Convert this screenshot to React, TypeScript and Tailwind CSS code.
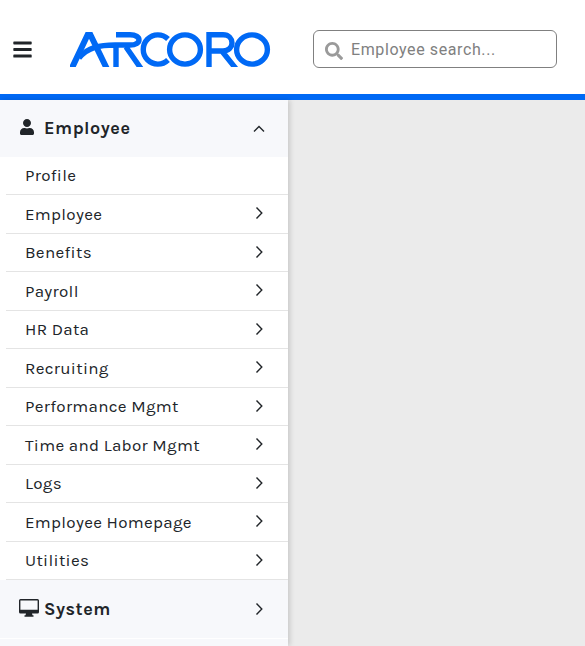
import { FaUser, FaBars, FaSearch } from "react-icons/fa";

const items = ["Employee","Benefits","Payroll","HR Data","Recruiting","Performance Mgmt","Time and Labor Mgmt","Logs","Employee Homepage","Utilities"];

function Logo() {
  return (
    <svg width="201" height="35" viewBox="0 0 201 35" fill="none" stroke="#0069f5" strokeWidth="5.4">
      <path d="M1 38 L18 2 L20 2 L37.5 38" strokeWidth="6" />
      <path d="M9 26 C 18 15 30 13 45 13 H60 C 72 13 72 2.8 60 2.8 H46 M46 13 V38 M56 15 L72 38" />
      <path d="M98 7 A14.6 14.6 0 1 0 98 28" />
      <ellipse cx="115" cy="17.5" rx="15.4" ry="14.6" />
      <path d="M139 38 V2.8 H153 C 165 2.8 165 19 153 19 H139 M151 18 L167 38" />
      <ellipse cx="182" cy="17.5" rx="15.4" ry="14.6" />
    </svg>
  );
}

function Monitor() {
  return (
    <svg width="20" height="18" viewBox="0 0 20 18" fill="#212529">
      <path fillRule="evenodd" d="M1.5 0 H18.5 A1.5 1.5 0 0 1 20 1.5 V13 A1.5 1.5 0 0 1 18.5 14.5 H13 L13.5 16.2 H14.5 V17.8 H5.5 V16.2 H6.5 L7 14.5 H1.5 A1.5 1.5 0 0 1 0 13 V1.5 A1.5 1.5 0 0 1 1.5 0 Z M1.4 1.5 V10.8 H18.6 V1.5 Z" />
    </svg>
  );
}

function Chevron({ dir }: { dir: "up" | "right" | "sys" }) {
  const cls = dir === "up" ? "ml-auto mt-[1px]" : dir === "sys" ? "ml-auto" : "ml-auto -mt-[2px]";
  return (
    <svg width="16" height="16" viewBox="0 0 16 16" fill="none" stroke="#212529" strokeWidth="1.4" className={cls}>
      <path d={dir === "up" ? "M3 10.5 L8 5.5 L13 10.5" : "M5.5 2.5 L10.8 8 L5.5 13.5"} />
    </svg>
  );
}

export default function App() {
  return (
    <div className="h-[646px] w-[585px] overflow-hidden bg-[#ebebeb] font-['Karla','Noto_Sans',sans-serif] text-[#212529]">
      <header className="flex h-[100px] items-center border-b-[6px] border-[#0069f5] bg-white pl-3 pt-1">
        <FaBars className="h-[21px] w-[21px] text-[#212529]" />
        <div className="ml-[37px]"><Logo /></div>
        <div className="ml-[42px] flex h-[38px] w-[244px] items-center rounded-md border border-[#808080] bg-white pl-[11px]">
          <FaSearch className="mt-[3px] h-[18px] w-[18px] text-[#9a9a9a]" />
          <span className="ml-2 mt-[2px] font-['Roboto',sans-serif] text-base tracking-[0.6px] text-[#808080]">Employee search...</span>
        </div>
      </header>
      <aside className="h-[546px] w-[288px] bg-white shadow-[2px_0_5px_rgba(0,0,0,0.15)]">
        <div className="flex h-[57px] items-center bg-[#f7f8fb] pl-[19px] pr-[21px]">
          <FaUser className="-mt-[3px] h-4 w-4" />
          <span className="ml-[9px] -mt-[2px] text-lg font-bold tracking-[0.5px]">Employee</span>
          <Chevron dir="up" />
        </div>
        <div className="ml-1.5">
          <div className="flex h-[38px] items-center border-b border-[#e4e4e4] pl-[19px] text-[17px] tracking-[0.3px]">Profile</div>
          {items.map((t) => (
            <div key={t} className="flex h-[38.5px] items-center border-b border-[#e4e4e4] pl-[19px] pr-[21px] pt-px text-[17px] tracking-[0.3px]">
              <span>{t}</span>
              <Chevron dir="right" />
            </div>
          ))}
        </div>
        <div className="flex h-[59px] items-center border-b border-white bg-[#f7f8fb] pl-[19px] pr-[21px]">
          <div className="-mt-[2px] flex"><Monitor /></div>
          <span className="ml-[5px] text-lg font-bold tracking-[0.5px]">System</span>
          <Chevron dir="sys" />
        </div>
        <div className="h-3 bg-[#f7f8fb]" />
      </aside>
    </div>
  );
}
